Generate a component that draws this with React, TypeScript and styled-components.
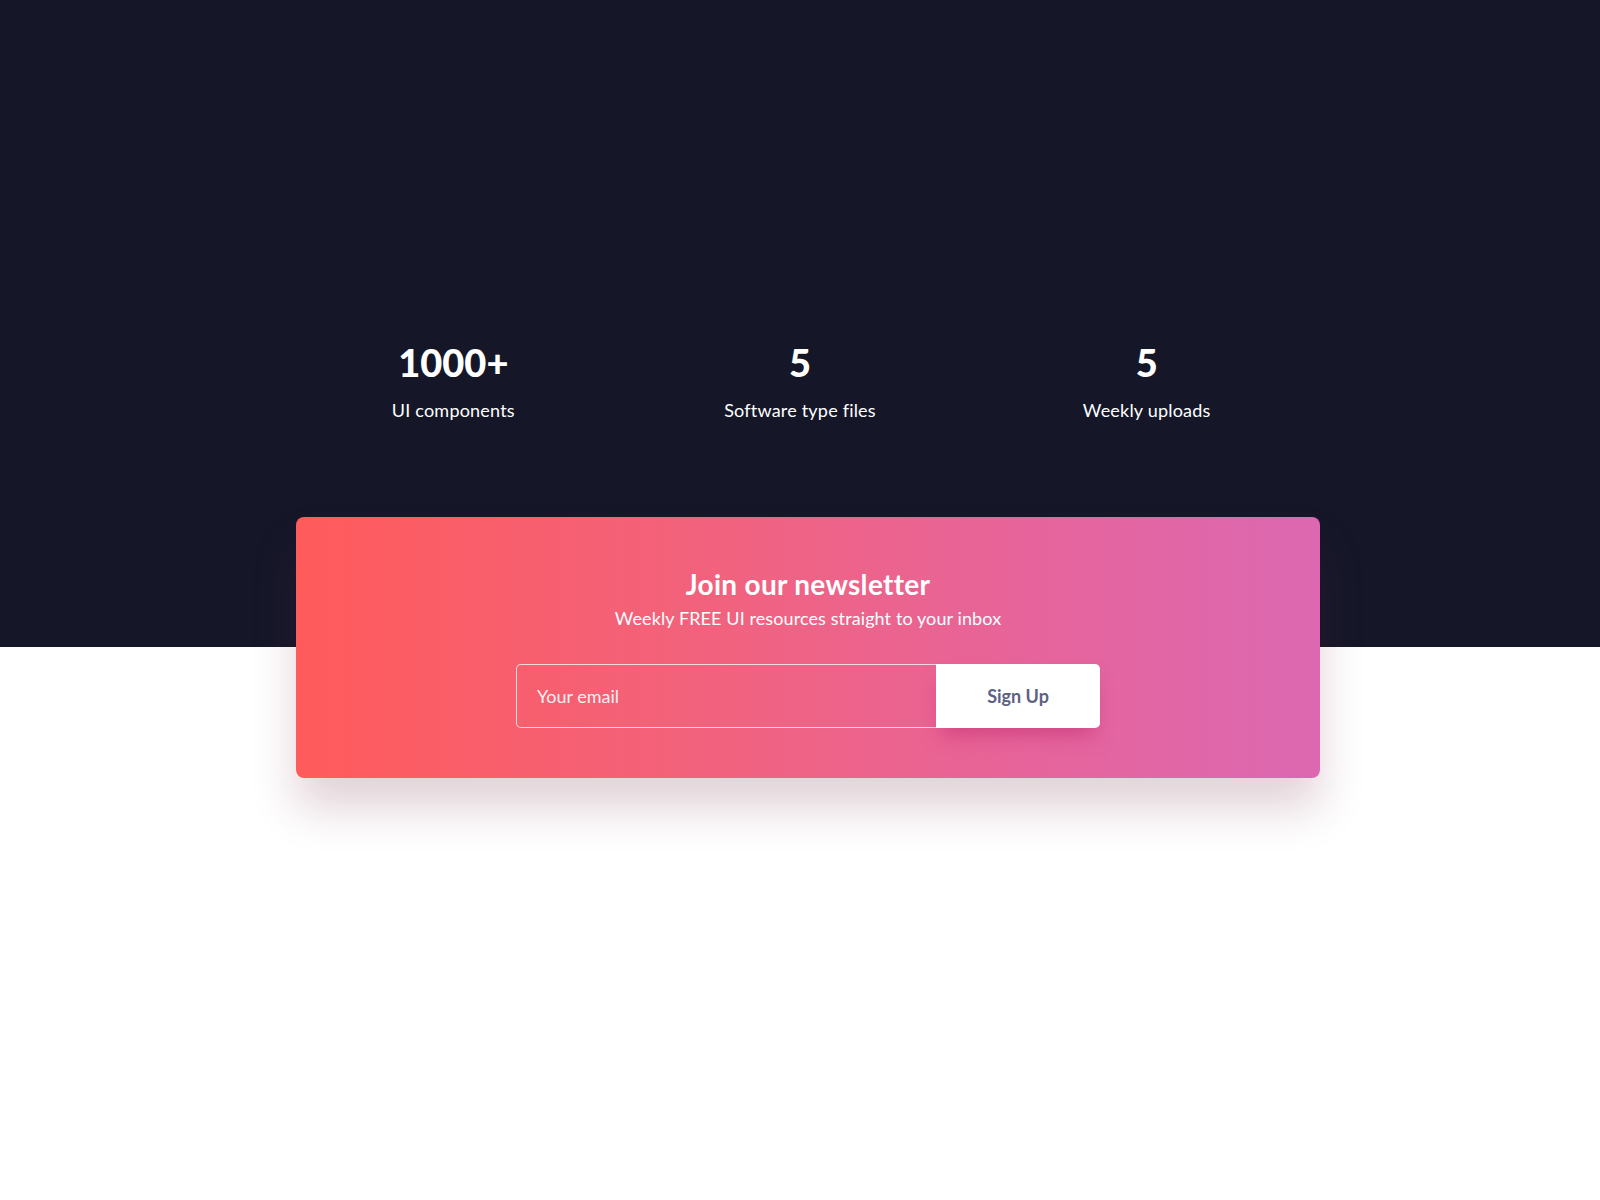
import styled, { createGlobalStyle } from "styled-components";

const stats = [
  { value: "1000+", label: "UI components" },
  { value: "5", label: "Software type files" },
  { value: "5", label: "Weekly uploads" },
];

const GlobalStyle = createGlobalStyle`
  body {
    margin: 0;
    background: #ffffff;
    font-family: "Lato", "Open Sans", sans-serif;
  }
`;

function App() {
  return (
    <Page>
      <GlobalStyle />
      <Hero>
        <StatsGrid>
          {stats.map((s) => (
            <Stat key={s.label}>
              <StatValue>{s.value}</StatValue>
              <StatLabel>{s.label}</StatLabel>
            </Stat>
          ))}
        </StatsGrid>
      </Hero>
      <CardRow>
        <Card>
          <Title>Join our newsletter</Title>
          <Subtitle>Weekly FREE UI resources straight to your inbox</Subtitle>
          <Form onSubmit={(e) => e.preventDefault()}>
            <EmailInput type="email" placeholder="Your email" />
            <SignUpButton type="submit">Sign Up</SignUpButton>
          </Form>
        </Card>
      </CardRow>
    </Page>
  );
}

const Page = styled.div`
  min-height: 100vh;
  background: #ffffff;
`;
const Hero = styled.section`
  background-color: #151729;
  padding: 339px 0 224px;
`;
const StatsGrid = styled.div`
  display: grid;
  grid-template-columns: repeat(3, 1fr);
  width: 1040px;
  margin: 0 auto;
`;
const Stat = styled.div`
  display: flex;
  flex-direction: column;
  align-items: center;
  color: #ffffff;
`;
const StatValue = styled.div`
  font-size: 38px;
  font-weight: 900;
  line-height: 46px;
`;
const StatLabel = styled.div`
  margin-top: 12px;
  font-size: 18px;
  font-weight: 400;
  line-height: 26px;
  letter-spacing: 0.2px;
`;
const CardRow = styled.div`
  display: flex;
  justify-content: center;
  padding: 0 0 120px 16px;
  margin-top: -130px;
`;
const Card = styled.div`
  width: 1024px;
  box-sizing: border-box;
  padding: 50px 0 50px;
  border-radius: 8px;
  background: linear-gradient(90deg, #ff5b5b 0%, #f2627d 40%, #e7649a 70%, #dc68b1 100%);
  box-shadow: 0 30px 45px rgba(110, 30, 60, 0.2);
  display: flex;
  flex-direction: column;
  align-items: center;
  color: #ffffff;
`;
const Title = styled.h2`
  margin: 0;
  font-size: 28px;
  font-weight: 700;
  line-height: 34px;
  letter-spacing: 0.3px;
`;
const Subtitle = styled.p`
  margin: 5px 0 0;
  font-size: 18px;
  font-weight: 400;
  line-height: 24px;
  letter-spacing: 0.1px;
`;
const Form = styled.form`
  display: flex;
  margin-top: 34px;
  width: 584px;
  height: 64px;
`;
const EmailInput = styled.input`
  flex: 1;
  box-sizing: border-box;
  height: 100%;
  padding: 0 20px;
  border: 1px solid rgba(255, 255, 255, 0.75);
  border-right: none;
  border-radius: 5px 0 0 5px;
  background: transparent;
  color: #ffffff;
  font-family: inherit;
  font-size: 18px;
  outline: none;
  &::placeholder {
    color: rgba(255, 255, 255, 0.92);
  }
`;
const SignUpButton = styled.button`
  width: 164px;
  height: 100%;
  border: none;
  border-radius: 0 5px 5px 0;
  background: #ffffff;
  color: #5e6282;
  font-family: inherit;
  font-size: 18px;
  font-weight: 700;
  cursor: pointer;
  box-shadow: 0 12px 20px -6px rgba(190, 40, 110, 0.55);
`;

export default App;
